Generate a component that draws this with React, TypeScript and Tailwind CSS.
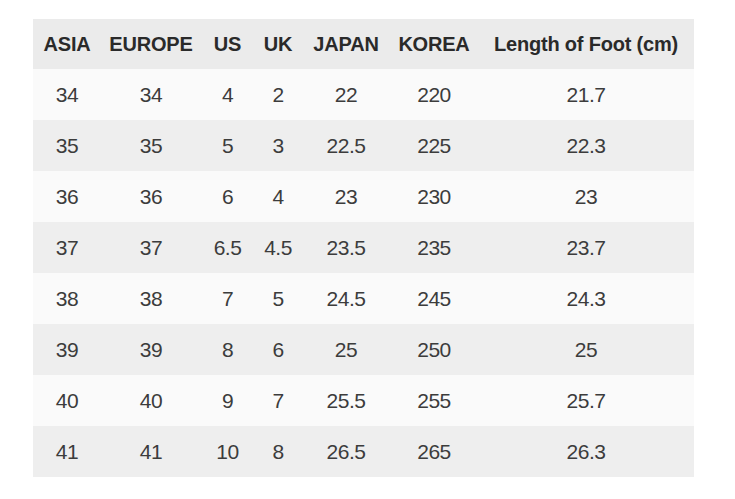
import React from 'react';

const headers = ['ASIA', 'EUROPE', 'US', 'UK', 'JAPAN', 'KOREA', 'Length of Foot (cm)'];

const rows: string[][] = [
  ['34', '34', '4', '2', '22', '220', '21.7'],
  ['35', '35', '5', '3', '22.5', '225', '22.3'],
  ['36', '36', '6', '4', '23', '230', '23'],
  ['37', '37', '6.5', '4.5', '23.5', '235', '23.7'],
  ['38', '38', '7', '5', '24.5', '245', '24.3'],
  ['39', '39', '8', '6', '25', '250', '25'],
  ['40', '40', '9', '7', '25.5', '255', '25.7'],
  ['41', '41', '10', '8', '26.5', '265', '26.3'],
];

// column widths taken from the chart
const cols = ['w-[68px]', 'w-[100px]', 'w-[53px]', 'w-[48px]', 'w-[88px]', 'w-[88px]', 'w-[216px]'];

export default function App() {
  return (
    <div className="w-[735px] h-[499px] bg-white pt-[19px] pl-[33px] font-['Liberation_Sans',Arial,sans-serif]">
      <table className="table-fixed border-collapse w-[661px]">
        <colgroup>
          {cols.map((c, i) => (
            <col key={i} className={c} />
          ))}
        </colgroup>
        <thead>
          <tr className="h-[50px] bg-[#ebebeb]">
            {headers.map((h) => (
              <th
                key={h}
                className="p-0 text-center text-[20px] font-bold text-[#2a2a2a] whitespace-nowrap tracking-[-0.2px]"
              >
                {h}
              </th>
            ))}
          </tr>
        </thead>
        <tbody>
          {rows.map((r, i) => (
            <tr key={r[0]} className={`h-[51px] ${i % 2 === 0 ? 'bg-[#fafafa]' : 'bg-[#eeeeee]'}`}>
              {r.map((v, j) => (
                <td key={j} className="p-0 text-center text-[21px] text-[#3c3c3c] tracking-[-0.5px]">
                  {v}
                </td>
              ))}
            </tr>
          ))}
        </tbody>
      </table>
    </div>
  );
}
